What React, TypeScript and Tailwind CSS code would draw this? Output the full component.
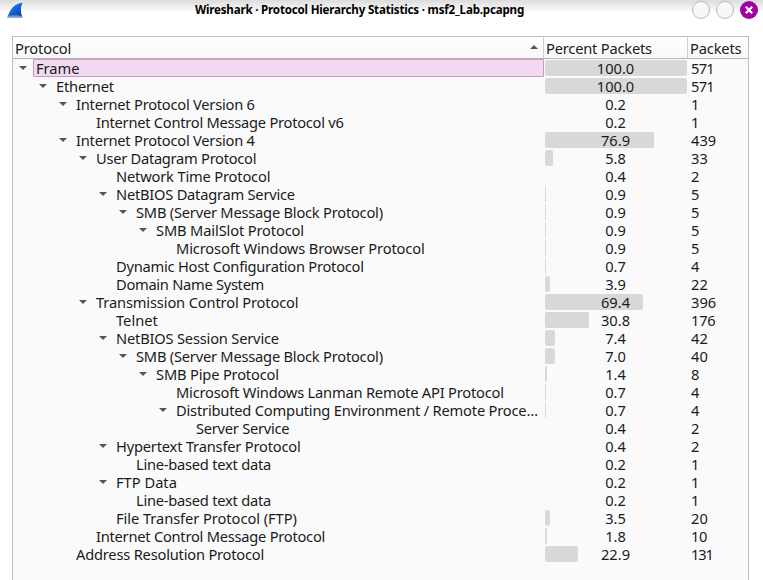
import React from 'react';

type Row = { depth: number; name: string; open?: boolean; pct: string; bar: number; packets: number; spacing?: number };

const rows: Row[] = [
  { depth: 0, name: 'Frame', open: true, pct: '100.0', bar: 142, packets: 571 },
  { depth: 1, name: 'Ethernet', open: true, pct: '100.0', bar: 142, packets: 571, spacing: -0.2 },
  { depth: 2, name: 'Internet Protocol Version 6', open: true, pct: '0.2', bar: 0, packets: 1, spacing: -0.23 },
  { depth: 3, name: 'Internet Control Message Protocol v6', pct: '0.2', bar: 0, packets: 1, spacing: -0.25 },
  { depth: 2, name: 'Internet Protocol Version 4', open: true, pct: '76.9', bar: 109, packets: 439, spacing: -0.23 },
  { depth: 3, name: 'User Datagram Protocol', open: true, pct: '5.8', bar: 8, packets: 33, spacing: -0.27 },
  { depth: 4, name: 'Network Time Protocol', pct: '0.4', bar: 0, packets: 2, spacing: -0.17 },
  { depth: 4, name: 'NetBIOS Datagram Service', open: true, pct: '0.9', bar: 1, packets: 5, spacing: -0.23 },
  { depth: 5, name: 'SMB (Server Message Block Protocol)', open: true, pct: '0.9', bar: 1, packets: 5, spacing: -0.22 },
  { depth: 6, name: 'SMB MailSlot Protocol', open: true, pct: '0.9', bar: 1, packets: 5, spacing: -0.14 },
  { depth: 7, name: 'Microsoft Windows Browser Protocol', pct: '0.9', bar: 1, packets: 5, spacing: -0.13 },
  { depth: 4, name: 'Dynamic Host Configuration Protocol', pct: '0.7', bar: 1, packets: 4, spacing: -0.23 },
  { depth: 4, name: 'Domain Name System', pct: '3.9', bar: 5, packets: 22, spacing: -0.28 },
  { depth: 3, name: 'Transmission Control Protocol', open: true, pct: '69.4', bar: 98, packets: 396, spacing: -0.14 },
  { depth: 4, name: 'Telnet', pct: '30.8', bar: 44, packets: 176 },
  { depth: 4, name: 'NetBIOS Session Service', open: true, pct: '7.4', bar: 10, packets: 42, spacing: -0.19 },
  { depth: 5, name: 'SMB (Server Message Block Protocol)', open: true, pct: '7.0', bar: 10, packets: 40, spacing: -0.22 },
  { depth: 6, name: 'SMB Pipe Protocol', open: true, pct: '1.4', bar: 2, packets: 8, spacing: -0.17 },
  { depth: 7, name: 'Microsoft Windows Lanman Remote API Protocol', pct: '0.7', bar: 1, packets: 4, spacing: -0.2 },
  { depth: 7, name: 'Distributed Computing Environment / Remote Proce…', open: true, pct: '0.7', bar: 1, packets: 4, spacing: -0.19 },
  { depth: 8, name: 'Server Service', pct: '0.4', bar: 0, packets: 2, spacing: -0.25 },
  { depth: 4, name: 'Hypertext Transfer Protocol', open: true, pct: '0.4', bar: 0, packets: 2, spacing: -0.19 },
  { depth: 5, name: 'Line-based text data', pct: '0.2', bar: 0, packets: 1, spacing: -0.24 },
  { depth: 4, name: 'FTP Data', open: true, pct: '0.2', bar: 0, packets: 1 },
  { depth: 5, name: 'Line-based text data', pct: '0.2', bar: 0, packets: 1, spacing: -0.24 },
  { depth: 4, name: 'File Transfer Protocol (FTP)', pct: '3.5', bar: 5, packets: 20, spacing: -0.06 },
  { depth: 3, name: 'Internet Control Message Protocol', pct: '1.8', bar: 2, packets: 10, spacing: -0.24 },
  { depth: 2, name: 'Address Resolution Protocol', pct: '22.9', bar: 33, packets: 131, spacing: -0.2 },
];

const countSpacing: Record<number, number> = { 571: -0.7, 131: -1.1, 176: -0.2, 10: -0.5 };

function TitleBar() {
  return (
    <header className="flex h-[37px] items-start bg-gradient-to-b from-[#dcdcdc] via-white via-35% to-white">
      <div className="w-[90px] pl-[7px] pt-[2px]">
        <svg width="17" height="17" viewBox="0 0 17 17">
          <defs>
            <linearGradient id="fin" x1="0" y1="0" x2="0.7" y2="1">
              <stop offset="0" stopColor="#2e86f5" />
              <stop offset="0.5" stopColor="#1266dc" />
              <stop offset="1" stopColor="#0845a8" />
            </linearGradient>
          </defs>
          <path d="M0.5 15.5C3 7 7.5 1.5 15.5 0.8C13.3 5 13.3 10 15.5 15.5Z" fill="url(#fin)" />
          <path d="M0.3 14.2C5 12.9 10.5 13 15.3 14.3V16H0.3Z" fill="#8eabd4" opacity="0.8" />
        </svg>
      </div>
      <h1 className="flex-1 whitespace-nowrap pl-[105px] pt-[2px] text-[11.6px] font-bold leading-[16px] tracking-[-0.2px] text-black">
        Wireshark · Protocol Hierarchy Statistics · msf2_Lab.pcapng
      </h1>
      <div className="flex gap-[6px] pr-[5px] pt-[1px]">
        <span className="size-[18px] rounded-full border border-[#b8b8b8] bg-[#f8f8f8]" />
        <span className="size-[18px] rounded-full border border-[#b8b8b8] bg-[#f8f8f8]" />
        <span className="flex size-[18px] items-center justify-center rounded-full bg-[#a000a0]">
          <svg width="8" height="8" viewBox="0 0 8 8" stroke="#fff" strokeWidth="2.2">
            <path d="M0.8 0.8L7.2 7.2M7.2 0.8L0.8 7.2" />
          </svg>
        </span>
      </div>
    </header>
  );
}

function TreeRow({ row, selected }: { row: Row; selected: boolean }) {
  return (
    <div className="flex h-[18px] items-center">
      <div className="flex h-full w-[531px] items-center">
        <div className="flex shrink-0 justify-end pr-[6px]" style={{ width: 20 + row.depth * 20 }}>
          {row.open && (
            <svg width="8" height="4" viewBox="0 0 8 4">
              <path d="M0 0H8L4 4Z" fill="#555" />
            </svg>
          )}
        </div>
        <div
          className={
            'flex h-full flex-1 items-center whitespace-nowrap rounded-[1px] border pl-[2px] ' +
            (selected ? 'border-[#c898c8] bg-[#f1daf1]' : 'border-transparent')
          }
        >
          <span style={{ letterSpacing: row.spacing ?? 0 }}>{row.name}</span>
        </div>
      </div>
      <div className="grid h-full w-[144px] items-center pl-[1px]">
        <div className="col-start-1 row-start-1 h-[16px] rounded-[2px] bg-[#d8d8d8]" style={{ width: row.bar }} />
        <span className="col-start-1 row-start-1 pr-[2px] text-center">{row.pct}</span>
      </div>
      <span className="pl-[3px]" style={{ letterSpacing: countSpacing[row.packets] ?? 0 }}>
        {row.packets}
      </span>
    </div>
  );
}

export default function App() {
  return (
    <div className="flex h-[580px] w-[763px] flex-col overflow-hidden bg-white font-['Noto_Sans',sans-serif] text-[#1b1b1b]">
      <TitleBar />
      <main className="ml-[12px] h-[544px] w-[737px] -mt-px border border-b-0 border-[#bdbdbd] bg-[#fafafa] text-[14.67px] leading-[18px]">
        <div className="flex h-[22px] items-center border-b border-[#b5b5b5] bg-gradient-to-b from-white to-[#f7f7f7]">
          <div className="flex h-full w-[531px] items-center justify-between border-r border-[#cfcfcf] pl-[2px] pr-[5px]">
            <span className="tracking-[-0.15px]">Protocol</span>
            <svg width="8" height="4" viewBox="0 0 8 4" className="mb-[2px]">
              <path d="M0 4H8L4 0Z" fill="#555" />
            </svg>
          </div>
          <div className="flex h-full w-[144px] items-center border-r border-[#cfcfcf] pl-[2px] tracking-[-0.2px]">Percent Packets</div>
          <div className="pl-[2px] tracking-[-0.15px]">Packets</div>
        </div>
        {rows.map((row, i) => (
          <TreeRow key={i} row={row} selected={i === 0} />
        ))}
      </main>
    </div>
  );
}
